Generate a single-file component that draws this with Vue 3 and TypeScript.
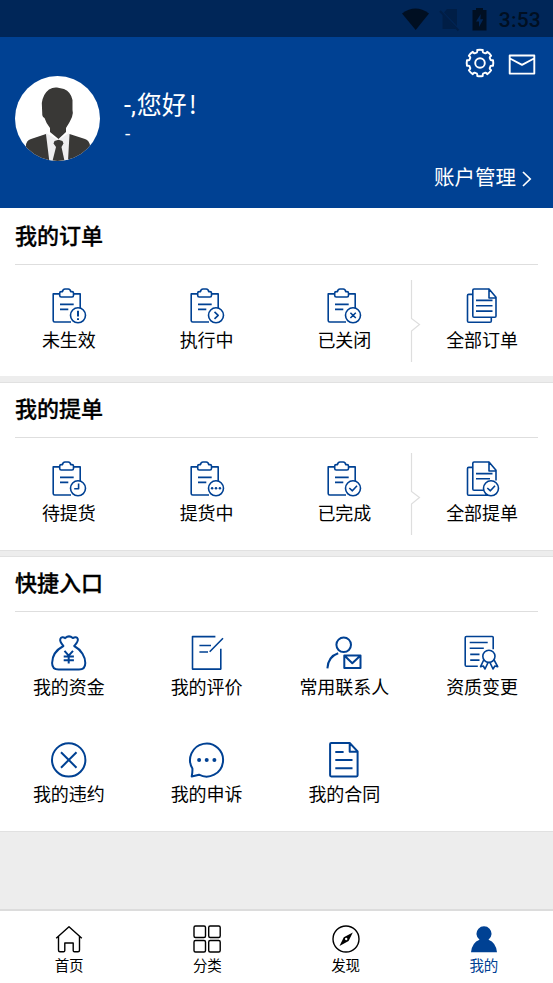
<script setup lang="ts">
interface Item { label: string; icon: string }
interface Card { title: string; divided: boolean; items: Item[] }

const cards: Card[] = [
  {
    title: '我的订单',
    divided: true,
    items: [
      { label: '未生效', icon: 'alert' },
      { label: '执行中', icon: 'next' },
      { label: '已关闭', icon: 'close' },
      { label: '全部订单', icon: 'docs' },
    ],
  },
  {
    title: '我的提单',
    divided: true,
    items: [
      { label: '待提货', icon: 'clock' },
      { label: '提货中', icon: 'dots' },
      { label: '已完成', icon: 'check' },
      { label: '全部提单', icon: 'docsCheck' },
    ],
  },
  {
    title: '快捷入口',
    divided: false,
    items: [
      { label: '我的资金', icon: 'money' },
      { label: '我的评价', icon: 'review' },
      { label: '常用联系人', icon: 'contact' },
      { label: '资质变更', icon: 'cert' },
      { label: '我的违约', icon: 'breach' },
      { label: '我的申诉', icon: 'chat' },
      { label: '我的合同', icon: 'contract' },
    ],
  },
]

const board = 'M22 36H5.700Q4.200 36 4.200 34.500V7.900H10.500M24.700 7.900H31.200V21.500M13.500 5.600Q14 3 16 3H19.200Q21.200 3 21.700 5.600H23Q24.500 5.600 24.500 7V9.500Q24.500 11 23 11H12.200Q10.700 11 10.700 9.500V7Q10.700 5.600 12.200 5.600ZM11 18.400H24.700M11 23.400H19.300'
const badge = 'M36.500 29.300A7.500 7.500 0 1 1 21.500 29.300A7.500 7.500 0 1 1 36.500 29.300Z'
const front = 'M27 3H12Q10.800 3 10.800 4.200V30Q10.800 31.300 12 31.300'

const thin: Record<string, string> = {
  alert: board + badge,
  next: board + badge + 'M27.500 25.800L31.200 29.300L27.500 32.800',
  close: board + badge + 'M26.400 26.700L31.800 32M31.800 26.700L26.400 32',
  clock: board + badge + 'M29.600 24.600V29.800H25.200',
  dots: board + badge,
  check: board + badge + 'M25.300 29L28.400 31.800L33 26.700',
  docs: front + 'H32.800Q34 31.300 34 30V11.200L27 3V12H34M10.500 8.400H6.700Q5.500 8.400 5.500 9.600V35Q5.500 36.300 6.700 36.300H28Q29.300 36.300 29.300 35V31.500M14 14.400H30.500M14 19.700H30.500M14 25.100H30.500',
  docsCheck: front + 'H21.500M34 21.500V11.200L27 3V12H34M10.500 8.400H6.700Q5.500 8.400 5.500 9.600V35Q5.500 36.300 6.700 36.300H26M14 14.600H30.500M14 19.700H28' + badge + 'M25.300 29L28.400 31.800L33 26.700',
  review: 'M28.400 3.600H5.500V36.100H33.800V15.800M36 5.200L22.700 18.800M12.400 12.500H24M12.400 19H21',
  cert: 'M31.200 16.300V4.500Q31.200 3.500 30.200 3.500H4.400Q3.200 3.500 3.200 4.700V32Q3.200 33.300 4.400 33.300H15.800M7.700 9.500H25.700M7.700 15.200H21.800M8.200 21.400H17.500M8.200 27.100H17.500M33 23.300A6.100 6.100 0 1 1 20.800 23.300A6.100 6.100 0 1 1 33 23.300ZM21.700 27L18.600 33.700L21.300 33L23 36L26 29.700M32.100 27L35.700 33.700L32.900 33L31 36L28 29.700',
}

const bold: Record<string, string> = {
  alert: 'M29 24.700V30.500M29 32.200V34',
  contract: 'M25.700 3H7.200Q6.100 3 6.100 4.100V35.300Q6.100 36.400 7.200 36.400H32.500Q33.600 36.400 33.600 35.300V11.400L25.700 3V11.700H33.600M11.300 12H19.600M11.300 20H28.500M11.300 28.200H28.500',
  money: 'M14.400 13C12.500 10.800 10.500 8.500 11.300 6C12 4 14.200 3.800 16.200 5.100Q20 1.700 23.800 5.100C26 3.800 28.200 4 28.800 6C29.400 8.500 27 10.800 25.200 13C32.500 17 36.300 24 36.300 30Q36.300 36.500 30 36.500H9.600Q3.100 36.500 3.100 30C3.100 23.500 7 17 14.400 13ZM15.500 17.900L19.700 22.700L24 17.900M19.700 22.700V30.500M14.700 23.500H24.900M14.700 27.200H24.900',
  contact: 'M27 11.800A7.300 7.300 0 1 1 12.400 11.800A7.300 7.300 0 1 1 27 11.800ZM3.400 35.400Q4 23.500 14.200 20.200M20.300 22.500H36.500V35H20.300ZM20.600 22.800L28.300 30.300L36.200 22.800',
  breach: 'M36.400 19.900A16.700 16.700 0 1 1 3 19.900A16.700 16.700 0 1 1 36.400 19.900ZM12 12.200L27.500 27.700M27.500 12.200L12 27.700',
  chat: 'M5.400 28.500A16.500 16.500 0 1 1 12 34.700L4.700 36.500Q5.600 32.300 5.400 28.500Z',
}

const dots: Record<string, { xs: number[]; y: number; r: number }> = {
  dots: { xs: [25.1, 29, 32.9], y: 29.2, r: 1.25 },
  chat: { xs: [12.1, 19.7, 27.4], y: 20, r: 2 },
}

const gear = Array.from({ length: 8 }, (_, i) => {
  const p = (r: number, deg: number) => {
    const a = ((i * 45 + deg - 90) * Math.PI) / 180
    return `${(15 + r * Math.cos(a)).toFixed(2)} ${(15 + r * Math.sin(a)).toFixed(2)}`
  }
  return `${i ? 'L' : 'M'}${p(13.3, -12)}Q${p(13.6, 0)} ${p(13.3, 12)}Q${p(10.4, 13)} ${p(11, 22.5)}Q${p(10.4, 32)} ${p(13.3, 33)}`
}).join('') + 'Z'

const tabs = ['首页', '分类', '发现', '我的']
</script>

<template>
  <div class="page">
    <div class="status">
      <svg class="status-icons" width="86" height="30" viewBox="0 0 86 30">
        <path class="dark" d="M0 7.500Q13.500-2.500 27 7.500L13.700 24Z" />
        <path class="faint" d="M45 3H55V20L42 6.500ZM40.500 9L54 23H40.500Z" />
        <path class="faint-line" d="M38 5L56.500 24.500" />
        <path class="dark" d="M74 2H81V4H84.500V24.500H70.500V4H74Z" />
        <path class="bolt" d="M78.800 8L74 15.500H77V21L81.300 13.200H78.300Z" />
      </svg>
      <span class="time">3:53</span>
    </div>

    <header class="hero">
      <div class="actions">
        <svg width="30" height="30" viewBox="0 0 30 30">
          <path :d="gear" />
          <circle cx="15" cy="15" r="4.8" />
        </svg>
        <svg width="28" height="30" viewBox="0 0 28 30">
          <path d="M1.700 7.500H26.300V25.600H1.700ZM2 10.500L14 16.800L26 10.500" />
        </svg>
      </div>
      <div class="user">
        <svg class="avatar" width="85" height="85" viewBox="0 0 85 85">
          <defs><clipPath id="face"><circle cx="42.500" cy="42.500" r="42.500" /></clipPath></defs>
          <g clip-path="url(#face)">
            <rect width="85" height="85" fill="#fff" />
            <path fill="#eeeef0" d="M31 57L43 64L54 57L54 85H34Z" />
            <path fill="#393836" d="M34 13.500Q38 11 42 11.500L49 13Q56 16 57.500 24V34Q58.500 37 57 41Q55 46 51 52V56L43.500 63L35 56V52Q31 47 29.500 42Q27 41 27.200 36.500L26.800 27Q28 18 34 13.500ZM31 58L34.300 85H5L11 70Q11 64.500 16 63ZM54.500 58L53 85H80L75 70Q74.500 64.500 70 63ZM39.500 65L43.500 63.800L47.500 65L48.500 67.500L46.500 71L49.500 85H37.500L41 71L38.500 67.500Z" />
          </g>
        </svg>
        <div class="names">
          <div class="hello"><span class="latin">-,</span>您好<span class="bang">!</span></div>
          <div class="company">-</div>
        </div>
      </div>
      <div class="account">
        账户管理
        <svg width="12" height="18" viewBox="0 0 12 18"><path d="M2 2L9.200 9L2 16" /></svg>
      </div>
    </header>

    <main class="cards">
      <section v-for="card in cards" :key="card.title" class="card">
        <h2>{{ card.title }}</h2>
        <div class="grid">
          <div v-for="item in card.items" :key="item.label" class="item">
            <svg class="icon" width="40" height="40" viewBox="0 0 40 40">
              <path v-if="thin[item.icon]" :d="thin[item.icon]" class="thin" />
              <path v-if="bold[item.icon]" :d="bold[item.icon]" class="bold" />
              <template v-if="dots[item.icon]">
                <circle v-for="x in dots[item.icon].xs" :key="x" :cx="x" :cy="dots[item.icon].y" :r="dots[item.icon].r" class="dot" />
              </template>
            </svg>
            <span>{{ item.label }}</span>
          </div>
          <svg v-if="card.divided" class="divider" width="12" height="82" viewBox="0 0 12 82">
            <path d="M1.500 0V38.500L9.500 44.500L1.500 51V82" />
          </svg>
        </div>
      </section>
    </main>

    <nav class="tabs">
      <div v-for="(tab, i) in tabs" :key="tab" class="tab" :class="{ active: i === 3 }">
        <svg width="30" height="30" viewBox="0 0 30 30">
          <path v-if="i === 0" d="M2.200 14.300L15 2.800L27.800 14.300M4.500 12.500V26.200Q4.500 27.700 6 27.700H9.500Q10.800 27.700 10.800 26.500V19H19.200V26.500Q19.200 27.700 20.500 27.700H24Q25.500 27.700 25.500 26.200V12.500" />
          <g v-else-if="i === 1">
            <rect x="2" y="2" width="11.500" height="11.500" rx="1.500" />
            <rect x="16.700" y="2" width="11.500" height="11.500" rx="1.500" />
            <rect x="2" y="16.500" width="11.500" height="11.500" rx="1.500" />
            <rect x="16.700" y="16.500" width="11.500" height="11.500" rx="1.500" />
          </g>
          <g v-else-if="i === 2">
            <circle cx="15" cy="15" r="13" />
            <path class="needle" fill-rule="evenodd" d="M21.800 8.500L17.600 17L8.500 22L12.800 13.200ZM14 15A1.200 1.200 0 1 0 16.400 15A1.200 1.200 0 1 0 14 15Z" />
          </g>
          <path v-else class="solid" d="M10.500 15.700A7.500 7.500 0 1 1 19.500 15.700Q27 18.500 28 28.200H2Q3 18.500 10.500 15.700Z" />
        </svg>
        <span>{{ tab }}</span>
      </div>
    </nav>
  </div>
</template>

<style>
body { margin: 0; }
</style>

<style scoped>
.page {
  display: flex;
  flex-direction: column;
  width: 553px;
  height: 983px;
  overflow: hidden;
  background: #ededed;
  color: #000;
  font-family: "Noto Sans CJK SC", sans-serif;
}
svg { display: block; flex: none; fill: none; }
.status {
  flex: none;
  box-sizing: border-box;
  display: flex;
  align-items: center;
  justify-content: flex-end;
  gap: 11px;
  height: 37px;
  padding-right: 12px;
  background: #002658;
}
.status-icons { margin-top: 4px; }
.dark { fill: #000f22; }
.faint { fill: #001e46; }
.faint-line { stroke: #001e46; stroke-width: 2; }
.bolt { fill: #002658; }
.time { padding-top: 3px; font: 500 21px/34px Roboto, sans-serif; color: #000f22; letter-spacing: 0.2px; }
.hero {
  flex: none;
  box-sizing: border-box;
  display: flex;
  flex-direction: column;
  height: 171px;
  padding: 11px 15px 0;
  background: #004193;
  color: #fff;
}
.actions { display: flex; justify-content: flex-end; gap: 13px; padding-right: 2px; height: 28px; }
.actions path, .actions circle { stroke: #fff; stroke-width: 1.9; stroke-linejoin: round; }
.user { display: flex; gap: 24px; height: 85px; }
.names { padding-top: 13px; }
.hello { height: 36px; font-size: 25px; line-height: 28px; white-space: nowrap; }
.latin { margin-right: 1px; font-family: Roboto, sans-serif; }
.bang { margin-left: 2px; }
.company { padding-left: 1px; font: 19px/18px Roboto, sans-serif; }
.account {
  display: flex;
  align-items: center;
  justify-content: flex-end;
  gap: 5px;
  height: 30px;
  padding-right: 5px;
  font-size: 20.5px;
  line-height: 30px;
}
.account svg { margin-top: 5px; }
.account path { stroke: #fff; stroke-width: 1.7; }
.cards { flex: 1; }
.card { border: solid #e1e1e1; border-width: 1px 0; background: #fff; }
.card:first-child { height: 166px; padding-top: 2px; border-width: 0; margin-bottom: 6px; }
.card:nth-child(2) { height: 167px; margin-bottom: 5px; }
.card:nth-child(3) { height: 274px; }
h2 {
  height: 54px;
  margin: 0 15px;
  border-bottom: 1px solid #dedede;
  font-size: 22px;
  font-weight: 500;
  line-height: 48px;
  -webkit-text-stroke: 0.3px #000;
}
.grid {
  position: relative;
  display: grid;
  grid-template-columns: repeat(4, 1fr);
  grid-auto-rows: 107px;
  padding: 21px 2px 0 0;
}
.item { display: flex; flex-direction: column; align-items: center; font-size: 18px; line-height: 26px; white-space: nowrap; }
.thin { stroke: #004193; stroke-width: 1.6; stroke-linejoin: round; }
.bold { stroke: #004193; stroke-width: 2; stroke-linejoin: round; }
.dot { fill: #004193; }
.divider { position: absolute; left: 410px; top: 15px; }
.divider path { stroke: #dedede; stroke-width: 1.2; }
.tabs {
  flex: none;
  box-sizing: border-box;
  display: grid;
  grid-template-columns: repeat(4, 1fr);
  height: 74px;
  padding-top: 13px;
  border-top: 2px solid #dcdcdc;
  background: #fff;
}
.tab { display: flex; flex-direction: column; align-items: center; font-size: 14.5px; line-height: 22px; }
.tab path, .tab rect, .tab circle { stroke: #000; stroke-width: 1.4; stroke-linejoin: round; }
.tab .needle { fill: #000; stroke: none; }
.tab .solid { fill: #004193; stroke: none; }
.active { color: #004193; }
</style>
